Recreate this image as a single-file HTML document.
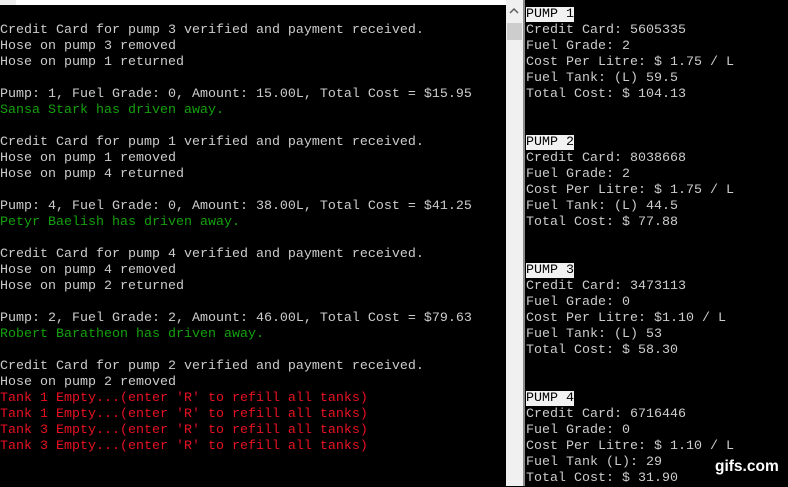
<!DOCTYPE html>
<html><head><meta charset="utf-8"><style>
body{margin:0;width:788px;height:486px;overflow:hidden;background:#000;position:relative;font-family:"Liberation Mono","DejaVu Sans Mono",monospace;font-size:13.33px;line-height:16px;color:#cccccc}
#top{position:absolute;left:0;top:0;width:506px;height:5px;background:#fff}
#top i{position:absolute;left:0;top:0;width:16px;height:5px;background:#eee}
#left{position:absolute;left:0;top:23px;width:506px;white-space:pre}
#sb{position:absolute;left:506px;top:0;width:17px;height:486px;background:#f0f0f0}
#thumb{position:absolute;left:507px;top:23px;width:15px;height:17px;background:#cdcdcd}
#arr{position:absolute;left:509px;top:8px;width:10px;height:6px}
#div{position:absolute;left:523px;top:0;width:2px;height:486px;background:#8a8a8a}
#right{position:absolute;left:526px;top:7px;white-space:pre}
.g{color:#13a10e}.r{color:#e81123}
.h{background:#f2f2f2;color:#000}
#logo{position:absolute;left:715px;top:457px;font-family:"Liberation Sans",sans-serif;font-weight:bold;font-size:15.5px;color:#fff;line-height:20px}
</style></head><body>
<div id="top"><i></i></div>
<div id="left">Credit Card for pump 3 verified and payment received.
Hose on pump 3 removed
Hose on pump 1 returned

Pump: 1, Fuel Grade: 0, Amount: 15.00L, Total Cost = $15.95
<span class="g">Sansa Stark has driven away.</span>

Credit Card for pump 1 verified and payment received.
Hose on pump 1 removed
Hose on pump 4 returned

Pump: 4, Fuel Grade: 0, Amount: 38.00L, Total Cost = $41.25
<span class="g">Petyr Baelish has driven away.</span>

Credit Card for pump 4 verified and payment received.
Hose on pump 4 removed
Hose on pump 2 returned

Pump: 2, Fuel Grade: 2, Amount: 46.00L, Total Cost = $79.63
<span class="g">Robert Baratheon has driven away.</span>

Credit Card for pump 2 verified and payment received.
Hose on pump 2 removed
<span class="r">Tank 1 Empty...(enter 'R' to refill all tanks)
Tank 1 Empty...(enter 'R' to refill all tanks)
Tank 3 Empty...(enter 'R' to refill all tanks)
Tank 3 Empty...(enter 'R' to refill all tanks)</span></div>
<div id="sb"></div><div id="thumb"></div>
<svg id="arr" viewBox="0 0 10 6"><path d="M1 5L5 1L9 5" stroke="#606060" stroke-width="1.5" fill="none"/></svg>
<div id="div"></div>
<div id="right"><span class="h">PUMP 1</span>
Credit Card: 5605335
Fuel Grade: 2
Cost Per Litre: $ 1.75 / L
Fuel Tank: (L) 59.5
Total Cost: $ 104.13


<span class="h">PUMP 2</span>
Credit Card: 8038668
Fuel Grade: 2
Cost Per Litre: $ 1.75 / L
Fuel Tank: (L) 44.5
Total Cost: $ 77.88


<span class="h">PUMP 3</span>
Credit Card: 3473113
Fuel Grade: 0
Cost Per Litre: $1.10 / L
Fuel Tank: (L) 53
Total Cost: $ 58.30


<span class="h">PUMP 4</span>
Credit Card: 6716446
Fuel Grade: 0
Cost Per Litre: $ 1.10 / L
Fuel Tank (L): 29
Total Cost: $ 31.90</div>
<div id="logo">gifs.com</div>
</body></html>
